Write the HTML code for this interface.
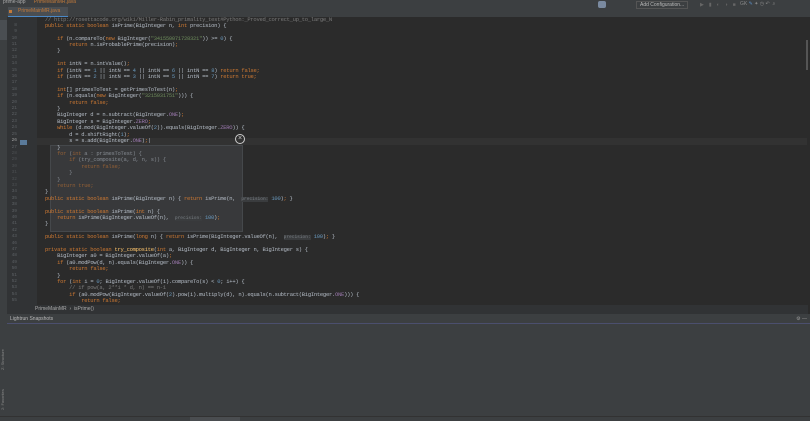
<!DOCTYPE html>
<html><head><meta charset="utf-8"><style>
*{margin:0;padding:0;box-sizing:border-box}
body{width:810px;height:421px;overflow:hidden;background:#2b2b2b;font-family:"Liberation Mono",monospace;position:relative}
.top{position:absolute;left:0;top:0;width:810px;height:17px;background:#3c3f41}
.ed{position:absolute;left:7px;top:17px;width:801px;height:288px;background:#2b2b2b}
.gut{position:absolute;left:7px;top:17px;width:30px;height:288px;background:#313335}
.code{position:absolute;left:0;top:29.2px;width:810px;font-size:5.5px;letter-spacing:-0.28px;color:#b4bcc6}
.r{height:6.42px;line-height:6.42px;white-space:pre;position:relative}
.n{position:absolute;left:0;width:17px;text-align:right;color:#5c6064;font-size:4.5px;letter-spacing:0}
.t{position:absolute;left:45px}
.k{color:#cc7832}.s{color:#6a8759}.m{color:#6897bb}.c{color:#7a7a7a}
.h{color:#787d82;font-size:4.5px;background:#3a3c3e;letter-spacing:0}
.pop{position:absolute;left:50px;top:145px;width:193px;height:87px;background:rgba(80,84,88,0.35);border:1px solid #45484b}
</style></head><body>
<div class="top"></div>
<div style="position:absolute;left:3px;top:0;font:5px 'Liberation Sans',sans-serif;color:#aaa;line-height:5px">prime-app &nbsp;&nbsp;&nbsp;&nbsp;&nbsp;<span style="color:#c27a3a">PrimeMainMR.java</span></div>
<div style="position:absolute;left:8px;top:7px;width:60px;height:10px;background:#4a4e52;border-bottom:1px solid #4a88c7;font:5px 'Liberation Sans',sans-serif;color:#c27a3a;line-height:9px;padding-left:10px">PrimeMainMR.java</div>
<div style="position:absolute;left:9px;top:10px;width:3px;height:3px;background:#c27a3a"></div>
<div style="position:absolute;left:636px;top:1px;width:52px;height:8px;border:1px solid #555;background:#3c3f41;font:5px 'Liberation Sans',sans-serif;color:#bbb;line-height:6px;padding-left:3px">Add Configuration...</div>
<div style="position:absolute;left:598px;top:1px;width:8px;height:7px;background:#7a8aa0;border-radius:2px"></div>
<div style="position:absolute;left:700px;top:2px;font:5px sans-serif;color:#666;letter-spacing:5px">▶▮◐◑■</div>
<div style="position:absolute;left:740px;top:1px;font:5px sans-serif;color:#888">GK <span style="color:#5a8ac0">✎</span> ✦ ◷ ↶ &nbsp;⌕</div>
<div style="position:absolute;left:0;top:6px;width:7px;height:415px;background:#3c3f41"></div>
<div style="position:absolute;left:0;top:20px;width:7px;height:20px;background:#4a4e52"></div>
<div class="ed"></div>
<div class="gut"></div>
<div style="position:absolute;left:37px;top:138.3px;width:770px;height:6.42px;background:#323232"></div>
<div style="position:absolute;left:806px;top:40px;width:2px;height:30px;background:#555"></div>
<div class="pop"></div>
<div style="position:absolute;left:235px;top:134px;width:10px;height:10px;border:1.5px solid #ccc;border-radius:50%;color:#ccc;font:7px sans-serif;text-align:center;line-height:7px">×</div>
<div style="position:absolute;left:20px;width:7px;height:5px;background:#5a7a9a;top:139.5px"></div>
<div class="code" style="top:16.8px">
<div class="r"><span class="t c">// http://rosettacode.org/wiki/Miller-Rabin_primality_test#Python:_Proved_correct_up_to_large_N</span></div>
<div class="r" style="margin-top:-0.7px"><span class="n">8</span><span class="t"><span class="k">public static boolean</span> isPrime(BigInteger n, <span class="k">int</span> precision) {</span></div>
</div>
<div class="code">
<div class="r"><span class="n">9</span></div>
<div class="r"><span class="n">10</span><span class="t">    <span class="k">if</span> (n.compareTo(<span class="k">new</span> BigInteger(<span class="s">"341550071728321"</span>)) >= <span class="m">0</span>) {</span></div>
<div class="r"><span class="n">11</span><span class="t">        <span class="k">return</span> n.isProbablePrime(precision)<span class="k">;</span></span></div>
<div class="r"><span class="n">12</span><span class="t">    }</span></div>
<div class="r"><span class="n">13</span></div>
<div class="r"><span class="n">14</span><span class="t">    <span class="k">int</span> intN = n.intValue()<span class="k">;</span></span></div>
<div class="r"><span class="n">15</span><span class="t">    <span class="k">if</span> (intN == <span class="m">1</span> || intN == <span class="m">4</span> || intN == <span class="m">6</span> || intN == <span class="m">8</span>) <span class="k">return false;</span></span></div>
<div class="r"><span class="n">16</span><span class="t">    <span class="k">if</span> (intN == <span class="m">2</span> || intN == <span class="m">3</span> || intN == <span class="m">5</span> || intN == <span class="m">7</span>) <span class="k">return true;</span></span></div>
<div class="r"><span class="n">17</span></div>
<div class="r"><span class="n">18</span><span class="t">    <span class="k">int</span>[] primesToTest = getPrimesToTest(n)<span class="k">;</span></span></div>
<div class="r"><span class="n">19</span><span class="t">    <span class="k">if</span> (n.equals(<span class="k">new</span> BigInteger(<span class="s">"3215031751"</span>))) {</span></div>
<div class="r"><span class="n">20</span><span class="t">        <span class="k">return false;</span></span></div>
<div class="r"><span class="n">21</span><span class="t">    }</span></div>
<div class="r"><span class="n">22</span><span class="t">    BigInteger d = n.subtract(BigInteger.<span style="color:#9876aa">ONE</span>)<span class="k">;</span></span></div>
<div class="r"><span class="n">23</span><span class="t">    BigInteger s = BigInteger.<span style="color:#9876aa">ZERO</span><span class="k">;</span></span></div>
<div class="r"><span class="n">24</span><span class="t">    <span class="k">while</span> (d.mod(BigInteger.valueOf(<span class="m">2</span>)).equals(BigInteger.<span style="color:#9876aa">ZERO</span>)) {</span></div>
<div class="r"><span class="n">25</span><span class="t">        d = d.shiftRight(<span class="m">1</span>)<span class="k">;</span></span></div>
<div class="r"><span class="n" style="color:#a0a0a0">26</span><span class="t">        s = s.add(BigInteger.<span style="color:#9876aa">ONE</span>)<span class="k">;</span>|</span></div>
<div class="r"><span class="n">27</span><span class="t">    }</span></div>
<div class="r" style="opacity:.6"><span class="n">28</span><span class="t">    <span class="k">for</span> (<span class="k">int</span> a : primesToTest) {</span></div>
<div class="r" style="opacity:.6"><span class="n">29</span><span class="t">        <span class="k">if</span> (try_composite(a, d, n, s)) {</span></div>
<div class="r" style="opacity:.6"><span class="n">30</span><span class="t">            <span class="k">return false;</span></span></div>
<div class="r" style="opacity:.6"><span class="n">31</span><span class="t">        }</span></div>
<div class="r" style="opacity:.6"><span class="n">32</span><span class="t">    }</span></div>
<div class="r" style="opacity:.6"><span class="n">33</span><span class="t">    <span class="k">return true;</span></span></div>
<div class="r"><span class="n">34</span><span class="t">}</span></div>
<div class="r"><span class="n">35</span><span class="t"><span class="k">public static boolean</span> isPrime(BigInteger n) { <span class="k">return</span> isPrime(n,  <span class="h">precision:</span> <span class="m">100</span>)<span class="k">;</span> }</span></div>
<div class="r"><span class="n">38</span></div>
<div class="r"><span class="n">39</span><span class="t"><span class="k">public static boolean</span> isPrime(<span class="k">int</span> n) {</span></div>
<div class="r"><span class="n">40</span><span class="t">    <span class="k">return</span> isPrime(BigInteger.valueOf(n),  <span class="h">precision:</span> <span class="m">100</span>)<span class="k">;</span></span></div>
<div class="r"><span class="n">41</span><span class="t">}</span></div>
<div class="r"><span class="n">42</span></div>
<div class="r"><span class="n">43</span><span class="t"><span class="k">public static boolean</span> isPrime(<span class="k">long</span> n) { <span class="k">return</span> isPrime(BigInteger.valueOf(n),  <span class="h">precision:</span> <span class="m">100</span>)<span class="k">;</span> }</span></div>
<div class="r"><span class="n">46</span></div>
<div class="r"><span class="n">47</span><span class="t"><span class="k">private static boolean</span> <span style="color:#ffc66d">try_composite</span>(<span class="k">int</span> a, BigInteger d, BigInteger n, BigInteger s) {</span></div>
<div class="r"><span class="n">48</span><span class="t">    BigInteger a0 = BigInteger.valueOf(a)<span class="k">;</span></span></div>
<div class="r"><span class="n">49</span><span class="t">    <span class="k">if</span> (a0.modPow(d, n).equals(BigInteger.<span style="color:#9876aa">ONE</span>)) {</span></div>
<div class="r"><span class="n">50</span><span class="t">        <span class="k">return false;</span></span></div>
<div class="r"><span class="n">51</span><span class="t">    }</span></div>
<div class="r"><span class="n">52</span><span class="t">    <span class="k">for</span> (<span class="k">int</span> i = <span class="m">0</span>; BigInteger.valueOf(i).compareTo(s) < <span class="m">0</span>; i++) {</span></div>
<div class="r"><span class="n">53</span><span class="t c">        // if pow(a, 2**i * d, n) == n-1</span></div>
<div class="r"><span class="n">54</span><span class="t">        <span class="k">if</span> (a0.modPow(BigInteger.valueOf(<span class="m">2</span>).pow(i).multiply(d), n).equals(n.subtract(BigInteger.<span style="color:#9876aa">ONE</span>))) {</span></div>
<div class="r"><span class="n">55</span><span class="t">            <span class="k">return false;</span></span></div>
</div>
<div style="position:absolute;left:7px;top:305px;width:801px;height:9px;background:#313335;font:5px 'Liberation Sans',sans-serif;color:#aaa;line-height:9px;padding-left:28px">PrimeMainMR &nbsp;›&nbsp; isPrime()</div>
<div style="position:absolute;left:7px;top:314px;width:803px;height:102px;background:#3c3f41"></div>
<div style="position:absolute;left:7px;top:314px;width:803px;height:10px;border-bottom:1px solid #4b4f6e;font:5px 'Liberation Sans',sans-serif;color:#bbb;line-height:10px;padding-left:3px">Lightrun Snapshots<span style="position:absolute;right:3px;color:#999">⚙ —</span></div>
<div style="position:absolute;left:0;top:335px;width:7px;font:4px sans-serif;color:#888;writing-mode:vertical-rl;transform:rotate(180deg);height:35px">Z: Structure</div>
<div style="position:absolute;left:0;top:375px;width:7px;font:4px sans-serif;color:#888;writing-mode:vertical-rl;transform:rotate(180deg);height:35px">2: Favorites</div>
<div style="position:absolute;left:0;top:416px;width:810px;height:5px;background:#3c3f41;border-top:1px solid #323232"></div>
<div style="position:absolute;left:190px;top:417px;width:50px;height:4px;background:#4a4d50"></div>
</body></html>
